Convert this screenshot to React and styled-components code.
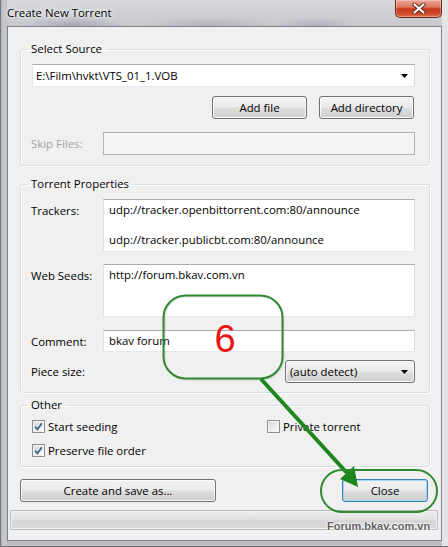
import React from 'react';
import styled, { createGlobalStyle } from 'styled-components';

const GlobalStyle = createGlobalStyle`
  html, body { margin: 0; padding: 0; }
  body {
    width: 448px;
    height: 547px;
    overflow: hidden;
    font-family: "Segoe UI", "Open Sans", "Noto Sans", sans-serif;
    font-size: 11.4px;
    color: #000;
    background: #c4c6ca;
  }
  * { box-sizing: border-box; }
`;

// Aero frame
const Window = styled.div`
  position: relative;
  width: 448px;
  height: 547px;
  padding: 0 6px 0 7px;
  background:
    radial-gradient(ellipse 50px 12px at 75px 27px, rgba(110, 95, 135, 0.35), transparent),
    radial-gradient(ellipse 70px 12px at 210px 28px, rgba(120, 120, 130, 0.3), transparent),
    radial-gradient(ellipse 40px 10px at 315px 27px, rgba(120, 100, 150, 0.3), transparent),
    linear-gradient(to right, #aeb0b3 0, #c9cbce 4px, #bfc1c4 7px, transparent 7px, transparent 442px, #e4e5e7 442px),
    linear-gradient(to bottom, #d6d8db 0, #c6c8cc 26px, #bcbec2 100%);
  box-shadow: inset 1px 0 0 #76787c, inset 0 -1px 0 #6d6f73;
`;

const TitleBar = styled.div`
  height: 26px;
  display: flex;
  justify-content: space-between;
  align-items: flex-start;
`;

const Caption = styled.span`
  padding-top: 5px;
  line-height: 15px;
  text-shadow: 0 0 6px #fff, 0 0 3px rgba(255, 255, 255, 0.9);
`;

const CloseX = styled.div`
  width: 47px;
  height: 18px;
  border: 1px solid #6a2a1e;
  border-top: none;
  border-radius: 0 0 5px 5px;
  background: linear-gradient(#eba797 0, #dc7760 42%, #c7381c 52%, #cf4a2c 80%, #e06f4f 100%);
  box-shadow: inset 0 0 0 1px rgba(255, 255, 255, 0.3);
  display: flex;
  align-items: center;
  justify-content: center;
`;

const Client = styled.div`
  border: 1px solid #7f8389;
  background: #f0f0f0;
  padding: 15px 3px 10px 2px;
`;

const Body = styled.div`
  padding: 0 8px 0 10px;
`;

const Group = styled.fieldset`
  margin: ${p => p.$top}px 0 0;
  padding: ${p => p.$pt}px 14px ${p => p.$pb}px 10px;
  border: 1px solid #d5dfe5;
  border-radius: 3px;
  min-inline-size: 0;
  box-shadow: inset 1px 1px 0 #fff, 1px 1px 0 #fff;
`;

const Legend = styled.legend`
  padding: 0 4px;
  margin-left: -4px;
  line-height: 14px;
`;

const Combo = styled.div`
  height: 23px;
  margin-left: 1px;
  padding: 0 6px 0 3px;
  display: flex;
  align-items: center;
  justify-content: space-between;
  background: #fff;
  border: 1px solid #abadb3;
  border-color: #abadb3 #dbdfe6 #e3e9ef #e2e3ea;
`;

const ButtonRow = styled.div`
  margin-top: 9px;
  padding-right: 1px;
  display: flex;
  justify-content: flex-end;
  gap: 12px;
`;

const Button = styled.div`
  width: ${p => p.$w}px;
  height: 23px;
  display: flex;
  align-items: center;
  justify-content: center;
  border: 1px solid ${p => (p.$default ? '#3c7fb1' : '#707070')};
  border-radius: 3px;
  background: linear-gradient(#f2f2f2 0%, #ebebeb 48%, #dddddd 52%, #cfcfcf 100%);
  box-shadow: inset 0 0 0 1px ${p => (p.$default ? '#9ed8f6' : '#fbfbfb')};
`;

const FieldRow = styled.div`
  display: flex;
  align-items: flex-start;
  justify-content: space-between;
  margin-top: ${p => p.$gap || 0}px;
`;

const FieldLabel = styled.div`
  width: 72px;
  flex: none;
  padding-top: 4px;
  line-height: 15px;
  color: ${p => (p.$disabled ? '#a3a3a3' : '#000')};
`;

const TextBox = styled.div`
  flex: 1;
  height: ${p => p.$h}px;
  padding: 2px 5px;
  line-height: 15px;
  white-space: pre;
  background: ${p => (p.$disabled ? '#f4f4f4' : '#fff')};
  border: 1px solid #abadb3;
  border-color: ${p => (p.$disabled ? '#adb2b5' : '#abadb3 #dbdfe6 #e3e9ef #e2e3ea')};
`;

const DropList = styled.div`
  width: 130px;
  height: 23px;
  padding: 0 6px 0 4px;
  display: flex;
  align-items: center;
  justify-content: space-between;
  border: 1px solid #707070;
  border-radius: 3px;
  background: linear-gradient(#f2f2f2 0%, #ebebeb 48%, #dddddd 52%, #cfcfcf 100%);
  box-shadow: inset 0 0 0 1px #fbfbfb;
`;

const CheckGrid = styled.div`
  display: grid;
  grid-template-columns: 235px 1fr;
  row-gap: 6px;
`;

const CheckItem = styled.div`
  height: 18px;
  display: flex;
  align-items: center;
  gap: 3px;
  padding-left: 1px;
`;

const Box = styled.span`
  width: 13px;
  height: 13px;
  flex: none;
  display: flex;
  align-items: center;
  justify-content: center;
  border: 1px solid #8e8f8f;
  background: linear-gradient(135deg, #d6d6d6, #fdfdfd);
  box-shadow: inset 0 0 0 1px #f4f4f4;
`;

const Actions = styled.div`
  margin-top: 12px;
  padding-right: 2px;
  display: flex;
  justify-content: space-between;
`;

const Progress = styled.div`
  margin-top: 8px;
  height: 20px;
  border: 1px solid #b8b8b8;
  border-radius: 2px;
  background: linear-gradient(#efefef 0%, #e2e2e2 45%, #d4d4d4 55%, #d9d9d9 100%);
  box-shadow: inset 0 0 0 1px #f4f4f4;
`;

const Watermark = styled.div`
  position: absolute;
  left: 327px;
  top: 520px;
  font-family: "Liberation Sans", Arial, sans-serif;
  font-weight: bold;
  font-size: 11px;
  line-height: 13px;
  color: #626262;
  text-shadow: 0 0 2px #fff, 0 0 2px #fff, 0 0 3px #fff;
`;

const Overlay = styled.svg`
  position: absolute;
  left: 0;
  top: 0;
  pointer-events: none;
`;

const Arrow = () => (
  <svg width="7" height="4" viewBox="0 0 7 4">
    <polygon points="0,0 7,0 3.5,4" fill="#000" />
  </svg>
);

const Check = ({ checked, children }) => (
  <CheckItem>
    <Box>
      {checked && (
        <svg width="11" height="11" viewBox="0 0 11 11">
          <path d="M2.2 5.6 L4.4 8.3 L8.8 2.4" fill="none" stroke="#4a5f97" strokeWidth="1.8" />
        </svg>
      )}
    </Box>
    {children}
  </CheckItem>
);

const trackers = 'udp://tracker.openbittorrent.com:80/announce\n\nudp://tracker.publicbt.com:80/announce';

export default function App() {
  return (
    <>
      <GlobalStyle />
      <Window>
        <TitleBar>
          <Caption>Create New Torrent</Caption>
          <CloseX>
            <svg width="14" height="11" viewBox="0 0 14 11">
              <path d="M2.5 1.5 L11.5 9.5 M11.5 1.5 L2.5 9.5" stroke="#5a2418" strokeWidth="4" strokeLinecap="round" />
              <path d="M2.5 1.5 L11.5 9.5 M11.5 1.5 L2.5 9.5" stroke="#fff" strokeWidth="2.2" strokeLinecap="round" />
            </svg>
          </CloseX>
        </TitleBar>

        <Client>
          <Body>
            <Group $top={0} $pt={8} $pb={10}>
              <Legend>Select Source</Legend>
              <Combo>
                <span>E:\Film\hvkt\VTS_01_1.VOB</span>
                <Arrow />
              </Combo>
              <ButtonRow>
                <Button $w={95}>Add file</Button>
                <Button $w={95}>Add directory</Button>
              </ButtonRow>
              <FieldRow $gap={13}>
                <FieldLabel $disabled>Skip Files:</FieldLabel>
                <TextBox $h={23} $disabled />
              </FieldRow>
            </Group>

            <Group $top={11} $pt={8} $pb={9}>
              <Legend>Torrent Properties</Legend>
              <FieldRow>
                <FieldLabel>Trackers:</FieldLabel>
                <TextBox $h={53}>{trackers}</TextBox>
              </FieldRow>
              <FieldRow $gap={12}>
                <FieldLabel>Web Seeds:</FieldLabel>
                <TextBox $h={53}>http://forum.bkav.com.vn</TextBox>
              </FieldRow>
              <FieldRow $gap={13}>
                <FieldLabel>Comment:</FieldLabel>
                <TextBox $h={22}>bkav forum</TextBox>
              </FieldRow>
              <FieldRow $gap={8}>
                <FieldLabel>Piece size:</FieldLabel>
                <DropList>
                  <span>(auto detect)</span>
                  <Arrow />
                </DropList>
              </FieldRow>
            </Group>

            <Group $top={5} $pt={5} $pb={7}>
              <Legend>Other</Legend>
              <CheckGrid>
                <Check checked>Start seeding</Check>
                <Check>Private torrent</Check>
                <Check checked>Preserve file order</Check>
              </CheckGrid>
            </Group>

            <Actions>
              <Button $w={196}>Create and save as...</Button>
              <Button $w={86} $default>Close</Button>
            </Actions>
          </Body>
          <Progress />
        </Client>

        <Watermark>Forum.bkav.com.vn</Watermark>

        <Overlay width="448" height="547" viewBox="0 0 448 547">
          <rect x="164.5" y="296.5" width="119" height="83" rx="22" fill="none" stroke="rgba(0,0,0,0.12)" strokeWidth="2" />
          <rect x="163.5" y="295.5" width="119" height="83" rx="22" fill="none" stroke="#2f8a2f" strokeWidth="2" />
          <text x="225" y="352" fontSize="38" fill="#ec1414" textAnchor="middle" fontFamily="Liberation Sans, Arial, sans-serif">6</text>
          <line x1="261" y1="379" x2="347" y2="473" stroke="#1d861d" strokeWidth="4" />
          <polygon points="358,487 340,479 354,466" fill="#1d861d" />
          <rect x="321" y="470" width="116" height="42" rx="21" fill="none" stroke="#2f8a2f" strokeWidth="2" />
        </Overlay>
      </Window>
    </>
  );
}
